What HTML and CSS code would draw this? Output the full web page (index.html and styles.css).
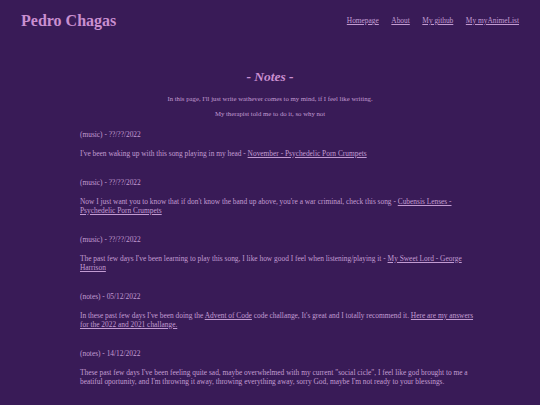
FILE: index.html
```html
<!DOCTYPE html>
<html>
<head>
<meta charset="utf-8">
<link rel="stylesheet" href="styles.css">
</head>
<body>
<header class="top">
  <h1 class="brand">Pedro Chagas</h1>
  <nav class="nav">
    <a href="#">Homepage</a>
    <a href="#">About</a>
    <a href="#">My github</a>
    <a href="#">My myAnimeList</a>
  </nav>
</header>
<main class="content">
  <section class="intro">
    <h2 class="title">- Notes -</h2>
    <p class="lead">In this page, I'll just write wathever comes to my mind, if I feel like writing.</p>
    <p class="lead second">My therapist told me to do it, so why not</p>
  </section>
  <section class="notes">
    <article class="note">
      <p class="date">(music) - ??/??/2022</p>
      <p class="text">I've been waking up with this song playing in my head - <a href="#">November - Psychedelic Porn Crumpets</a></p>
    </article>
    <article class="note">
      <p class="date">(music) - ??/??/2022</p>
      <p class="text">Now I just want you to know that if don't know the band up above, you're a war criminal, check this song - <a href="#">Cubensis Lenses - Psychedelic Porn Crumpets</a></p>
    </article>
    <article class="note">
      <p class="date">(music) - ??/??/2022</p>
      <p class="text">The past few days I've been learning to play this song, I like how good I feel when listening/playing it - <a href="#">My Sweet Lord - George Harrison</a></p>
    </article>
    <article class="note">
      <p class="date">(notes) - 05/12/2022</p>
      <p class="text">In these past few days I've been doing the <a href="#">Advent of Code</a> code challange, It's great and I totally recommend it. <a href="#">Here are my answers for the 2022 and 2021 challange.</a></p>
    </article>
    <article class="note">
      <p class="date">(notes) - 14/12/2022</p>
      <p class="text">These past few days I've been feeling quite sad, maybe overwhelmed with my current "social cicle", I feel like god brought to me a beatiful oportunity, and I'm throwing it away, throwing everything away, sorry God, maybe I'm not ready to your blessings.</p>
    </article>
  </section>
</main>
</body>
</html>
```
FILE: styles.css
```css
html, body {
  margin: 0;
  padding: 0;
  background: #391b57;
}
body {
  font-family: "Liberation Serif", "Times New Roman", serif;
  color: #c29bd2;
  font-size: 7.4px;
  line-height: 9px;
  min-height: 405px;
}
a {
  color: #c29bd2;
  text-decoration: underline;
}
.top {
  display: flex;
  justify-content: space-between;
  align-items: flex-start;
  padding: 12px 21px 0 21px;
}
.brand {
  margin: 0;
  font-size: 16px;
  line-height: 18px;
  font-weight: bold;
  color: #c98fd0;
}
.nav {
  display: flex;
  gap: 12.5px;
  padding-top: 4px;
}
.content {
  padding: 0 58px 0 80px;
}
.intro {
  text-align: center;
  padding-top: 39px;
  margin-left: -80px;
  margin-right: -58px;
}
.title {
  margin: 0;
  font-size: 13.5px;
  line-height: 16px;
  font-weight: bold;
  font-style: italic;
  color: #c98fd0;
}
.lead {
  margin: 9px 0 0 0;
  font-size: 6.75px;
}
.lead.second {
  margin-top: 6px;
}
.notes {
  padding-top: 12px;
}
.note {
  margin-bottom: 20.5px;
}
.date {
  margin: 0 0 9.5px 0;
}
.text {
  margin: 0;
}
```
